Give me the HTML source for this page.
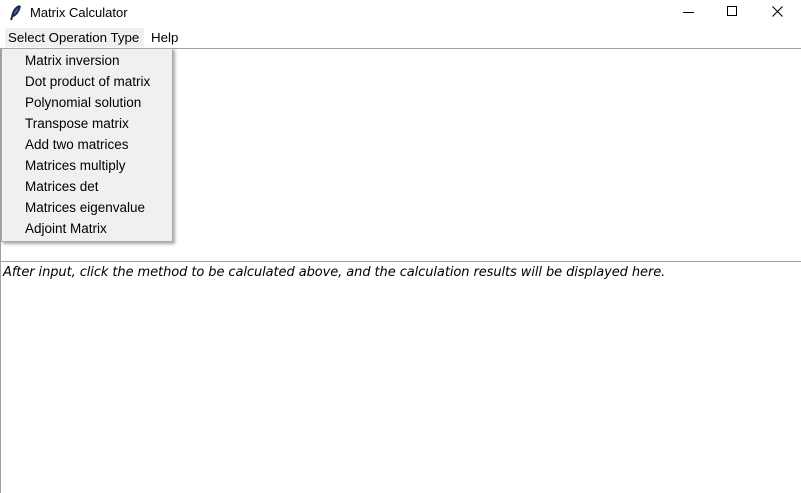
<!DOCTYPE html>
<html><head><style>
*{margin:0;padding:0;box-sizing:border-box}
body{width:801px;height:493px;background:#fff;font-family:"Liberation Sans","Noto Sans CJK SC",sans-serif;position:relative;overflow:hidden;font-size:13px;color:#000}
.abs{position:absolute;white-space:nowrap}
</style></head><body>
<svg class="abs" style="left:10px;top:5px" width="12" height="16" viewBox="0 0 12 16"><path d="M10 1 C6 2 3 6 2 12 L1 15 M10 1 C9 6 6 10 3 11" stroke="#1a2a4a" stroke-width="2" fill="#3a5a8a"/></svg>
<div class="abs" style="left:30px;top:5px">Matrix Calculator</div>
<div class="abs" style="left:683px;top:12px;width:11px;height:1px;background:#000"></div>
<div class="abs" style="left:727px;top:6px;width:10px;height:10px;border:1px solid #000"></div>
<svg class="abs" style="left:772px;top:6px" width="11" height="11"><path d="M0.5 0.5L10.5 10.5M10.5 0.5L0.5 10.5" stroke="#000" stroke-width="1.1"/></svg>
<div class="abs" style="left:5px;top:28px;width:139px;height:19px;background:#f0f0f0"></div>
<div class="abs" style="left:8px;top:30px;font-size:13.3px">Select Operation Type</div>
<div class="abs" style="left:151px;top:30px;font-size:13.3px">Help</div>
<div class="abs" style="left:0;top:48px;width:801px;height:1px;background:#a0a0a0"></div>
<div class="abs" style="left:0;top:48px;width:1px;height:445px;background:#a0a0a0"></div>
<div class="abs" style="left:0;top:261px;width:801px;height:1px;background:#a0a0a0"></div>
<div class="abs" style="left:3px;top:265px;font-style:italic;font-family:'DejaVu Sans',sans-serif;font-size:13px;letter-spacing:-0.08px">After input, click the method to be calculated above, and the calculation results will be displayed here.</div>
<div class="abs" style="left:1px;top:48px;width:172px;height:194px;background:#f0f0f0;border:1px solid #a8a8a8;box-shadow:2px 2px 3px rgba(0,0,0,0.35)">
<div style="position:absolute;left:23px;top:1px;line-height:21px;font-size:13.5px">
Matrix inversion<br>Dot product of matrix<br>Polynomial solution<br>Transpose matrix<br>Add two matrices<br>Matrices multiply<br>Matrices det<br>Matrices eigenvalue<br>Adjoint Matrix
</div></div>
</body></html>
